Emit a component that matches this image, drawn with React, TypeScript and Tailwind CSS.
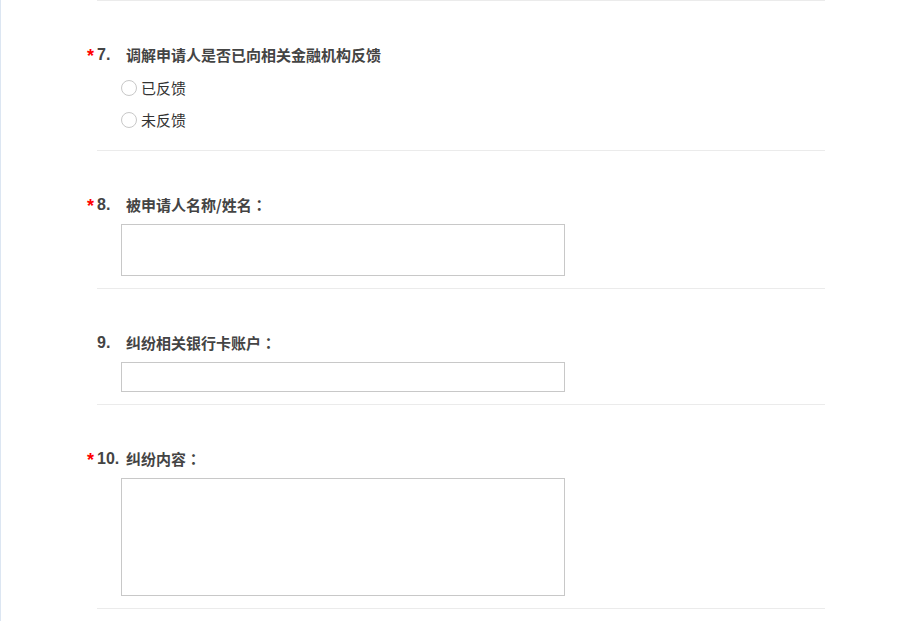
import React from "react";

const FONT = {
  fontFamily: '"Microsoft YaHei", "Noto Sans CJK SC", "Noto Sans", sans-serif',
};

function Title({ no, text, required }: { no: string; text: string; required?: boolean }) {
  const hasColon = text.endsWith("：");
  const body = hasColon ? text.slice(0, -1) : text;
  return (
    <div className="relative flex h-[20px] items-center text-[15px] font-bold leading-[20px] text-[#444]">
      {required && (
        <span className="absolute left-[-10px] top-[1px] font-['Liberation_Sans',sans-serif] text-[18px] font-bold leading-[20px] text-[#f00]">
          *
        </span>
      )}
      <span className="w-[29px] shrink-0 font-['Liberation_Sans',sans-serif] text-[16px]">{no}</span>
      <span>
        {body}
        {hasColon && <span className="font-['Noto_Sans_CJK_JP',sans-serif]">：</span>}
      </span>
    </div>
  );
}

function Radio({ label }: { label: string }) {
  return (
    <label className="flex h-[32px] items-center gap-[4px] text-[15px] text-[#333]">
      <span className="h-[16px] w-[16px] rounded-full border border-[#c8c8c8] bg-white" />
      <span className="pt-[1px]">{label}</span>
    </label>
  );
}

export default function App() {
  return (
    <div className="min-h-[621px] w-[920px] overflow-hidden border-l border-[#dce6f2] bg-white" style={FONT}>
      <div className="ml-[96px] w-[728px]">
        <div className="h-0 border-b border-[#ebebeb]" />

        {/* 7 */}
        <div className="border-b border-[#ebebeb] pb-[14px] pt-[44px]">
          <Title no="7." text="调解申请人是否已向相关金融机构反馈" required />
          <div className="ml-[24px] mt-[7px]">
            <Radio label="已反馈" />
            <Radio label="未反馈" />
          </div>
        </div>

        {/* 8 */}
        <div className="border-b border-[#ebebeb] pb-[12px] pt-[44px]">
          <Title no="8." text="被申请人名称/姓名：" required />
          <textarea className="ml-[24px] mt-[9px] block h-[52px] w-[444px] resize-none border border-[#c8c8c8] outline-none" />
        </div>

        {/* 9 */}
        <div className="border-b border-[#ebebeb] pb-[12px] pt-[44px]">
          <Title no="9." text="纠纷相关银行卡账户：" />
          <input className="ml-[24px] mt-[9px] block h-[30px] w-[444px] border border-[#c8c8c8] outline-none" />
        </div>

        {/* 10 */}
        <div className="border-b border-[#ebebeb] pb-[12px] pt-[44px]">
          <Title no="10." text="纠纷内容：" required />
          <textarea className="ml-[24px] mt-[9px] block h-[118px] w-[444px] resize-none border border-[#c8c8c8] outline-none" />
        </div>
      </div>
    </div>
  );
}
